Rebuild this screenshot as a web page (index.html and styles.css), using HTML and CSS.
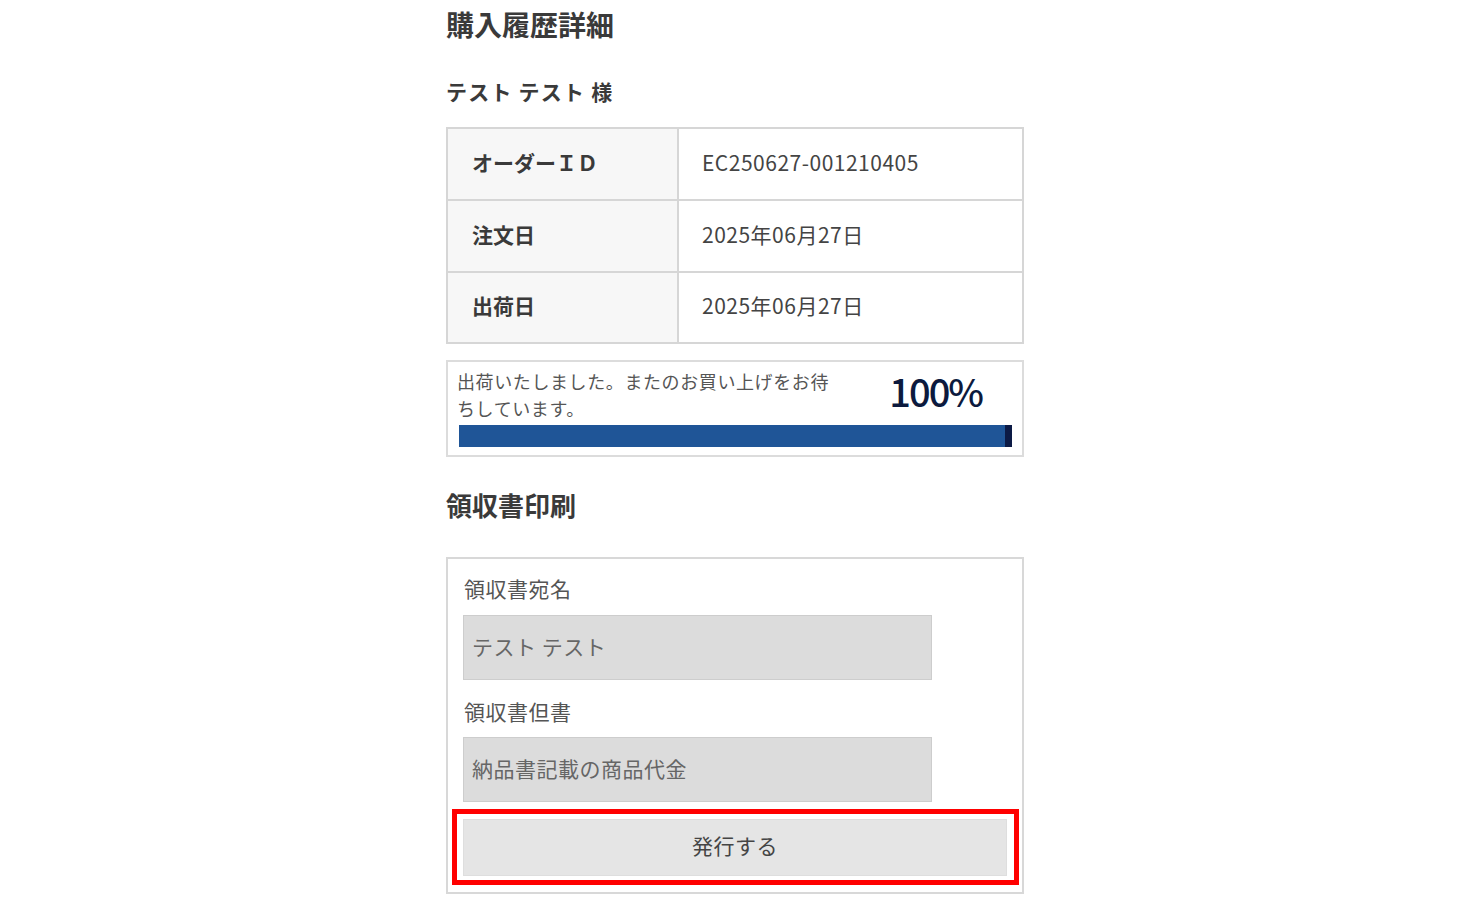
FILE: index.html
```html
<!DOCTYPE html>
<html lang="ja">
<head>
<meta charset="utf-8">
<title>購入履歴詳細</title>
<link rel="stylesheet" href="styles.css">
</head>
<body>
<main class="page">
  <h1 class="page-title">購入履歴詳細</h1>
  <p class="customer">テスト テスト 様</p>

  <div class="order-table">
    <div class="cell label">オーダーＩＤ</div>
    <div class="cell value">EC250627-001210405</div>
    <div class="cell label">注文日</div>
    <div class="cell value">2025年06月27日</div>
    <div class="cell label last">出荷日</div>
    <div class="cell value last">2025年06月27日</div>
  </div>

  <div class="progress-box">
    <div class="progress-head">
      <p class="progress-msg">出荷いたしました。またのお買い上げをお待ちしています。</p>
      <span class="progress-pct">100%</span>
    </div>
    <div class="progress-bar"><div class="progress-fill" style="width:100%"></div></div>
  </div>

  <h2 class="section-title">領収書印刷</h2>

  <form class="receipt-box">
    <label class="field-label" for="r-name">領収書宛名</label>
    <input class="field-input first" id="r-name" type="text" value="テスト テスト" readonly>
    <label class="field-label second" for="r-note">領収書但書</label>
    <input class="field-input" id="r-note" type="text" value="納品書記載の商品代金" readonly>
    <div class="button-wrap">
      <button class="issue-btn" type="button">発行する</button>
      <span class="highlight"></span>
    </div>
  </form>
</main>
</body>
</html>
```

FILE: styles.css
```css
* { box-sizing: border-box; }

html, body {
  margin: 0;
  padding: 0;
  background: #fff;
}

body {
  font-family: "Noto Sans CJK JP", "Noto Sans", sans-serif;
  color: #3a3a3a;
}

.page {
  width: 580px;
  margin: 0 auto;
  padding: 4px 2px 0 0;
}

.page-title {
  margin: 0;
  font-size: 28px;
  line-height: 40px;
  font-weight: 700;
  color: #3a3a3a;
}

.customer {
  margin: 31px 0 0;
  font-size: 21px;
  line-height: 32px;
  font-weight: 700;
  letter-spacing: 1.2px;
  color: #3a3a3a;
}

.order-table {
  margin-top: 20px;
  display: grid;
  grid-template-columns: 231px 1fr;
  border: 2px solid #d6d6d6;
}

.cell {
  height: 72px;
  display: flex;
  align-items: center;
  padding-bottom: 5px;
  font-size: 21px;
  border-bottom: 2px solid #d6d6d6;
}

.cell.last { height: 69px; border-bottom: 0; }

.cell.label {
  background: #f7f7f7;
  font-weight: 700;
  padding-left: 24px;
  border-right: 2px solid #d6d6d6;
  color: #3a3a3a;
}

.cell.value {
  padding-left: 23px;
  font-weight: 400;
  letter-spacing: 0.5px;
  color: #444;
}

.progress-box {
  margin-top: 16px;
  border: 2px solid #dcdcdc;
  padding: 6px 10px 8px 11px;
}

.progress-head {
  display: flex;
  justify-content: space-between;
  align-items: center;
}

.progress-msg {
  margin: 0 0 0 -2px;
  width: 380px;
  font-size: 18px;
  line-height: 27px;
  letter-spacing: 0.6px;
  color: #555;
}

.progress-pct {
  font-size: 38px;
  line-height: 40px;
  font-weight: 500;
  letter-spacing: -2px;
  color: #0c1a3e;
  padding-right: 30px;
  margin-top: -8px;
}

.progress-bar {
  margin-top: 3px;
  height: 22px;
  background: #e8e8e8;
}

.progress-fill {
  height: 100%;
  background: #1f5597;
  border-right: 7px solid #0c1a45;
}

.section-title {
  margin: 29px 0 0;
  font-size: 26px;
  line-height: 38px;
  font-weight: 700;
  color: #3a3a3a;
}

.receipt-box {
  margin: 33px 0 0;
  border: 2px solid #d8d8d8;
  padding: 14px 15px 16px;
  display: flex;
  flex-direction: column;
  align-items: flex-start;
}

.field-label {
  display: block;
  margin-left: 1px;
  font-size: 21px;
  line-height: 30px;
  letter-spacing: 0.5px;
  color: #555;
}

.field-label.second { margin-top: 16px; }

.field-input {
  margin-top: 11px;
  width: 469px;
  height: 65px;
  background: #dcdcdc;
  border: 1px solid #cdcdcd;
  padding: 0 8px 4px;
  font-family: inherit;
  font-size: 21px;
  letter-spacing: 0.5px;
  color: #666;
  outline: none;
}

.field-input.first { margin-top: 12px; }

.button-wrap {
  position: relative;
  margin-top: 17px;
  width: 100%;
}

.issue-btn {
  display: block;
  width: 100%;
  height: 57px;
  background: #e5e5e5;
  border: 1px solid #dedede;
  font-family: inherit;
  font-size: 21px;
  letter-spacing: 0.5px;
  color: #444;
  padding: 0 0 6px;
}

.highlight {
  position: absolute;
  top: -10px;
  left: -11px;
  right: -12px;
  bottom: -9px;
  border: 5px solid #ff0000;
  pointer-events: none;
}
```
